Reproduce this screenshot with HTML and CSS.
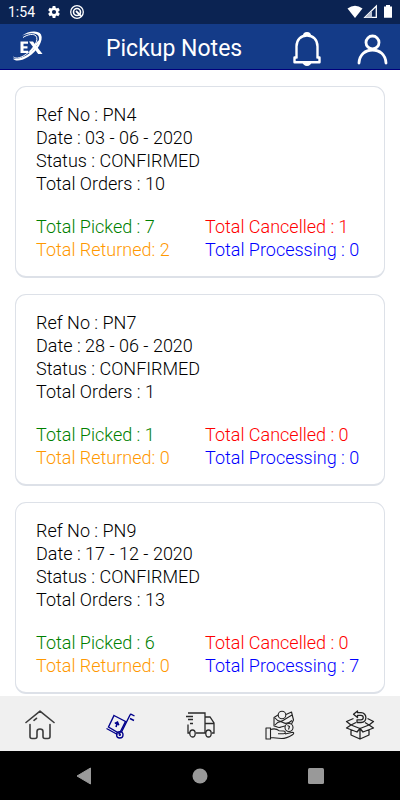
FILE: index.html
```html
<!DOCTYPE html>
<html lang="en">
<head>
<meta charset="utf-8">
<meta name="viewport" content="width=device-width, initial-scale=1">
<title>Pickup Notes</title>
<link rel="stylesheet" href="styles.css">
</head>
<body>
<div class="status">
  <span class="clock">1:54</span>
  <svg class="gear" width="14" height="14" viewBox="0 0 24 24" fill="#fff"><path d="M19.4 13a7.500 7.500 0 0 0 0-2l2.600-2-2.500-4.300-3 1.200a8 8 0 0 0-1.700-1L14.300 1.500H9.700L9.200 4.900a8 8 0 0 0-1.700 1l-3-1.200L2 9l2.600 2a7.500 7.500 0 0 0 0 2L2 15l2.500 4.300 3-1.200a8 8 0 0 0 1.700 1l.5 3.400h4.600l.5-3.400a8 8 0 0 0 1.700-1l3 1.200L22 15zM12 15.600a3.600 3.600 0 1 1 0-7.200 3.600 3.600 0 0 1 0 7.200z"/></svg>
  <svg width="16" height="16" viewBox="0 0 16 16" fill="none" stroke="#fff"><circle cx="8" cy="8" r="6.300" stroke-width="1.300"/><circle cx="8" cy="8" r="3.500" stroke-width="1.600"/><path d="M7 7l5 5" stroke-width="1.800"/></svg>
  <svg class="signals" width="46" height="16" viewBox="0 0 46 16"><path d="M1.500 4.500Q9-.8 16.500 4.500L9 14z" fill="#fff"/><path d="M19 13.300L30.300 2v11.300z" fill="none" stroke="#fff" stroke-width="1.300"/><path d="M19 13.500L26 6.600v6.900z" fill="#b9c1d2"/><path d="M40 1h4v1.500h2v11.300h-8V2.500h2z" fill="#fff"/></svg>
</div>
<header class="header">
  <svg class="logo" width="32" height="34" viewBox="0 0 32 34">
    <path d="M8.500 11.500h7.500v2.200h-4.500v2.500h4v2.200h-4v2.400H16V23H8.500z" fill="#fff"/>
    <path d="M17 11.500h4L30.500 24h-4.300z" fill="#fff"/><path d="M27 11L17.500 23" stroke="#fff" stroke-width="1.800"/>
    <path d="M10 5.800C16 1 26 0 29 4.500c3 6-4 17-13 22.500C9.500 31 3 31.800 1 28.500c4 1 9-.5 14-3.500C23.500 19.500 29 10.500 26.500 6 24 2 16 2.500 10 5.800z" fill="#fff"/>
    <path d="M11 7.500c5-3.500 11-4 13-1.500 3 4-2 12-9 17.500C10 27.500 4 29.500 1.500 27" fill="none" stroke="#fff" stroke-width="1"/>
  </svg>
  <h1 class="title">Pickup Notes</h1>
  <button class="icon-button" aria-label="Notifications"><svg width="30" height="36" viewBox="0 0 30 36"><g fill="none" stroke="#fff" stroke-width="2.400" stroke-linejoin="round"><path d="M4.500 27.500V15.500c0-7 4.500-11 10.500-11s10.500 4 10.500 11v12"/><path d="M4.500 26.500h-2v4.700h25v-4.700h-2"/></g><path d="M11 4.500a4 3.500 0 0 1 8 0zM10.500 31h9a4.500 4 0 0 1-9 0z" fill="#fff"/></svg></button>
  <button class="icon-button profile" aria-label="Profile"><svg width="32" height="32" viewBox="0 0 32 32" fill="none" stroke="#fff" stroke-width="2.800" stroke-linecap="round"><circle cx="16.500" cy="9.500" r="6.500"/><path d="M3 30C3.500 21.500 9.500 17 16.500 17S29.500 21.500 30 30"/></svg></button>
</header>
<main class="notes">
  <article class="card">
    <p>Ref No : PN4</p><p>Date : 03 - 06 - 2020</p><p>Status : CONFIRMED</p><p>Total Orders : 10</p>
    <div class="totals"><p class="picked">Total Picked : 7</p><p class="cancelled">Total Cancelled : 1</p><p class="returned">Total Returned: 2</p><p class="processing">Total Processing : 0</p></div>
  </article>
  <article class="card">
    <p>Ref No : PN7</p><p>Date : 28 - 06 - 2020</p><p>Status : CONFIRMED</p><p>Total Orders : 1</p>
    <div class="totals"><p class="picked">Total Picked : 1</p><p class="cancelled">Total Cancelled : 0</p><p class="returned">Total Returned: 0</p><p class="processing">Total Processing : 0</p></div>
  </article>
  <article class="card">
    <p>Ref No : PN9</p><p>Date : 17 - 12 - 2020</p><p>Status : CONFIRMED</p><p>Total Orders : 13</p>
    <div class="totals"><p class="picked">Total Picked : 6</p><p class="cancelled">Total Cancelled : 0</p><p class="returned">Total Returned: 0</p><p class="processing">Total Processing : 7</p></div>
  </article>
</main>
<nav class="tabs">
  <a href="#home" aria-label="Home"><svg width="30" height="30" viewBox="0 0 30 30" fill="none" stroke="#3c3c3c" stroke-width="1.600" stroke-linecap="round" stroke-linejoin="round"><path d="M1 12.500L15 1.200l14 11.300M5 14.500v12q0 2 2 2h3q2 0 2-2v-5q0-2.500 3-2.500t3 2.500v5q0 2 2 2h3q2 0 2-2v-12M9 10.300l2.500-2"/></svg></a>
  <a href="#pickups" aria-label="Pickups" class="active"><svg width="30" height="30" viewBox="0 0 30 30" fill="none" stroke="#00008b" stroke-width="1.400"><path d="M9 5.500L20.500 11.500l-6 12L3.500 17z"/><path d="M1.500 18.500l11 6"/><circle cx="14.800" cy="24.800" r="3.200"/><circle cx="14.800" cy="24.800" r=".5"/><path d="M16.500 22L25 5q.4-1 1.400-.7L29.500 6M25 8.500l4 2"/><path d="M11 17l1.500-4.500m-2.700 1l2.700-1.300 1.300 3" stroke-width="1.600"/></svg></a>
  <a href="#deliveries" aria-label="Deliveries"><svg width="30" height="30" viewBox="0 0 30 30" fill="none" stroke="#292929" stroke-width="1.300"><path d="M3 3h17v20h-9M1 6.500h7M3 9.500h5M5 13.500h3M3 14.500V23h2M20 7h5l4 6v10h-2M20 13.500h9M20 23h1"/><ellipse cx="7.500" cy="23.500" rx="2.700" ry="3.500"/><ellipse cx="23.500" cy="23.500" rx="2.700" ry="3.500"/></svg></a>
  <a href="#payments" aria-label="Payments"><svg width="30" height="30" viewBox="0 0 30 30" fill="none" stroke="#222" stroke-width="1.100" stroke-linejoin="round"><path d="M1 18h4.500v11H1zM5.500 19.500c3-1 6-1 8.500 1.200l4.500.3c2.500.2 2.300 2.700 0 2.700H13M20 24l6.500-1.500c2.500-.5 3 1 1 2.200-4 2.500-8 3.800-11 3.800L5.500 27.500"/><circle cx="17" cy="5" r="3.800"/><circle cx="24" cy="17.500" r="4"/><path d="M13 5L9 7.500v8.500c3 .5 4 2.500 7 1l4-1M21 4.500L26.500 2l2 8-2 4M10 8q4 5 8 2.500T27 5M10 15q4-5 8-2.500t9-2M22.500 15.500l2 1-1 3"/></svg></a>
  <a href="#returns" aria-label="Returns"><svg width="30" height="30" viewBox="0 0 30 30" fill="none" stroke="#222" stroke-width="1.300" stroke-linejoin="round"><path d="M8.500 8.500L1.500 11.500l4.500 3.500-4.500 3L12 22l3-3.500 3 3.500 10.500-4-4.500-3 4.500-3.500-6-3M6 15l9 3.500 9-3.500M6 15l5-2.500M24 15l-4-2.500M6 20v5l9 4 9-4v-5M15 18.500V29"/><path d="M12.500 1L8.500 4.200l4 3.300V5.300H16c3 0 3 4.500 0 4.500h-4v2.700h4c6.500 0 6.500-9.800 0-9.800h-3.500z"/></svg></a>
</nav>
<div class="system">
  <button aria-label="Back"><svg width="16" height="18" viewBox="0 0 16 18"><path d="M14.500 1v16L1 9z" fill="#999" stroke="#999" stroke-linejoin="round"/></svg></button>
  <button aria-label="Home screen"><svg width="16" height="16" viewBox="0 0 16 16"><circle cx="8" cy="8" r="7.500" fill="#999"/></svg></button>
  <button aria-label="Recent apps"><svg width="16" height="16" viewBox="0 0 16 16"><rect width="16" height="16" rx="1.500" fill="#999"/></svg></button>
</div>
</body>
</html>
```
FILE: styles.css
```css
* { box-sizing: border-box; }
body {
  margin: 0;
  height: 100vh;
  display: flex;
  flex-direction: column;
  background: #fff;
  color: #000;
  font-family: Roboto, "Liberation Sans", sans-serif;
}
p, h1 { margin: 0; }
svg { display: block; }
button { padding: 0; border: 0; background: none; }
.status {
  flex: none;
  height: 24px;
  display: flex;
  align-items: center;
  padding: 0 8px;
  background: #0b2352;
  color: #fff;
}
.clock { font-size: 14px; margin-right: 12px; }
.gear { margin-right: 8px; }
.signals { margin-left: auto; }
.header {
  flex: none;
  height: 46px;
  display: flex;
  align-items: center;
  padding: 0 12px;
  background: #143b88;
  border-bottom: 1px solid #00007c;
}
.title {
  flex: 1;
  padding: 4px 0 0 62px;
  color: #fff;
  font-size: 23px;
  font-weight: 400;
  line-height: 30px;
}
.icon-button { padding-top: 4px; }
.profile { margin: 0 0 0 34px; }
.notes {
  flex: 1;
  min-height: 0;
  overflow: hidden;
  padding: 16px 15px;
}
.card {
  padding: 16px 20px 15px;
  margin-bottom: 16px;
  border: 1px solid #dde1e8;
  border-bottom-width: 2px;
  border-radius: 11px;
  font-size: 18px;
  font-weight: 300;
  line-height: 23px;
}
.totals {
  display: grid;
  grid-template-columns: 1fr 1fr;
  column-gap: 10px;
  margin-top: 20px;
}
.picked { color: #008000; }
.cancelled { color: #f00; }
.returned { color: #ff9800; }
.processing { color: #00f; }
.tabs {
  flex: none;
  height: 55px;
  display: flex;
  background: #f0f0f0;
}
.tabs a {
  flex: 1;
  display: flex;
  align-items: center;
  justify-content: center;
  padding-top: 2px;
}
.system {
  flex: none;
  height: 49px;
  display: flex;
  align-items: center;
  justify-content: center;
  gap: 100px;
  background: #000;
}
```
